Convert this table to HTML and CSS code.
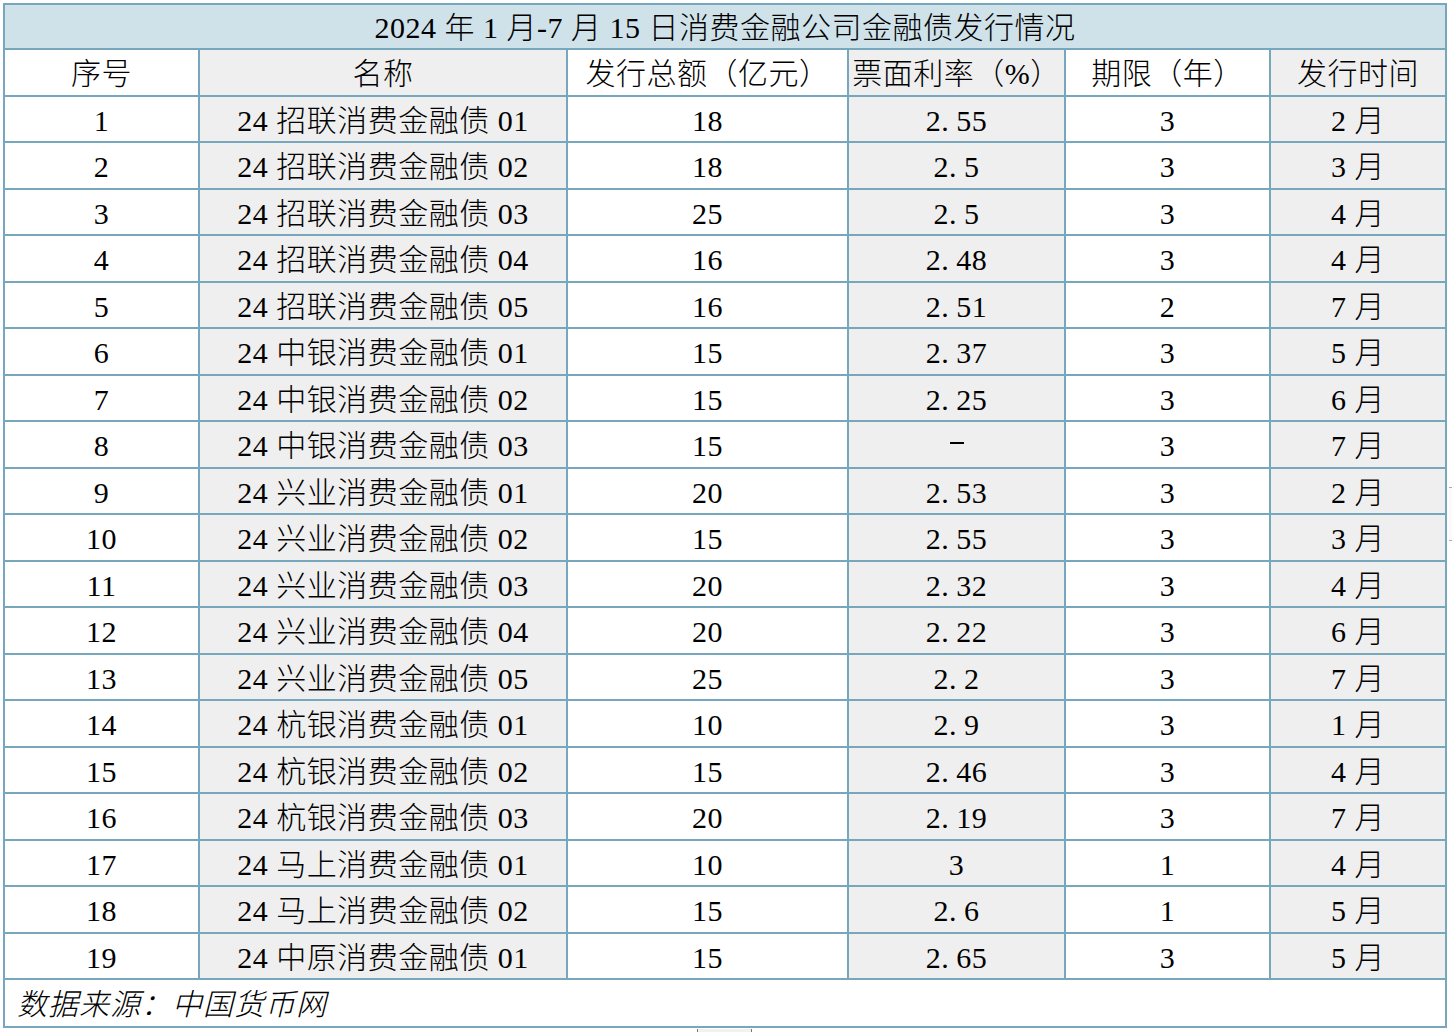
FILE: index.html
```html
<!DOCTYPE html>
<html lang="zh-CN">
<head>
<meta charset="utf-8">
<title>2024年1月-7月15日消费金融公司金融债发行情况</title>
<link rel="stylesheet" href="styles.css">
</head>
<body>
<div class="sheet">
  <div class="cell title">2024 年 1 月-7 月 15 日消费金融公司金融债发行情况</div>

  <div class="cell">序号</div><div class="cell g">名称</div><div class="cell">发行总额（亿元）</div><div class="cell g">票面利率（%）</div><div class="cell">期限（年）</div><div class="cell g">发行时间</div>

  <div class="cell">1</div><div class="cell g">24 招联消费金融债 01</div><div class="cell">18</div><div class="cell g">2<span class="pt">.</span>55</div><div class="cell">3</div><div class="cell g">2 月</div>
  <div class="cell">2</div><div class="cell g">24 招联消费金融债 02</div><div class="cell">18</div><div class="cell g">2<span class="pt">.</span>5</div><div class="cell">3</div><div class="cell g">3 月</div>
  <div class="cell">3</div><div class="cell g">24 招联消费金融债 03</div><div class="cell">25</div><div class="cell g">2<span class="pt">.</span>5</div><div class="cell">3</div><div class="cell g">4 月</div>
  <div class="cell">4</div><div class="cell g">24 招联消费金融债 04</div><div class="cell">16</div><div class="cell g">2<span class="pt">.</span>48</div><div class="cell">3</div><div class="cell g">4 月</div>
  <div class="cell">5</div><div class="cell g">24 招联消费金融债 05</div><div class="cell">16</div><div class="cell g">2<span class="pt">.</span>51</div><div class="cell">2</div><div class="cell g">7 月</div>
  <div class="cell">6</div><div class="cell g">24 中银消费金融债 01</div><div class="cell">15</div><div class="cell g">2<span class="pt">.</span>37</div><div class="cell">3</div><div class="cell g">5 月</div>
  <div class="cell">7</div><div class="cell g">24 中银消费金融债 02</div><div class="cell">15</div><div class="cell g">2<span class="pt">.</span>25</div><div class="cell">3</div><div class="cell g">6 月</div>
  <div class="cell">8</div><div class="cell g">24 中银消费金融债 03</div><div class="cell">15</div><div class="cell g"><span class="dash"></span></div><div class="cell">3</div><div class="cell g">7 月</div>
  <div class="cell">9</div><div class="cell g">24 兴业消费金融债 01</div><div class="cell">20</div><div class="cell g">2<span class="pt">.</span>53</div><div class="cell">3</div><div class="cell g">2 月</div>
  <div class="cell">10</div><div class="cell g">24 兴业消费金融债 02</div><div class="cell">15</div><div class="cell g">2<span class="pt">.</span>55</div><div class="cell">3</div><div class="cell g">3 月</div>
  <div class="cell">11</div><div class="cell g">24 兴业消费金融债 03</div><div class="cell">20</div><div class="cell g">2<span class="pt">.</span>32</div><div class="cell">3</div><div class="cell g">4 月</div>
  <div class="cell">12</div><div class="cell g">24 兴业消费金融债 04</div><div class="cell">20</div><div class="cell g">2<span class="pt">.</span>22</div><div class="cell">3</div><div class="cell g">6 月</div>
  <div class="cell">13</div><div class="cell g">24 兴业消费金融债 05</div><div class="cell">25</div><div class="cell g">2<span class="pt">.</span>2</div><div class="cell">3</div><div class="cell g">7 月</div>
  <div class="cell">14</div><div class="cell g">24 杭银消费金融债 01</div><div class="cell">10</div><div class="cell g">2<span class="pt">.</span>9</div><div class="cell">3</div><div class="cell g">1 月</div>
  <div class="cell">15</div><div class="cell g">24 杭银消费金融债 02</div><div class="cell">15</div><div class="cell g">2<span class="pt">.</span>46</div><div class="cell">3</div><div class="cell g">4 月</div>
  <div class="cell">16</div><div class="cell g">24 杭银消费金融债 03</div><div class="cell">20</div><div class="cell g">2<span class="pt">.</span>19</div><div class="cell">3</div><div class="cell g">7 月</div>
  <div class="cell">17</div><div class="cell g">24 马上消费金融债 01</div><div class="cell">10</div><div class="cell g">3</div><div class="cell">1</div><div class="cell g">4 月</div>
  <div class="cell">18</div><div class="cell g">24 马上消费金融债 02</div><div class="cell">15</div><div class="cell g">2<span class="pt">.</span>6</div><div class="cell">1</div><div class="cell g">5 月</div>
  <div class="cell">19</div><div class="cell g">24 中原消费金融债 01</div><div class="cell">15</div><div class="cell g">2<span class="pt">.</span>65</div><div class="cell">3</div><div class="cell g">5 月</div>

  <div class="cell foot">数据来源：中国货币网</div>
</div>
<div class="tab-bottom"></div>
<div class="tab-right"></div>
</body>
</html>
```

FILE: styles.css
```css
html, body {
  margin: 0;
  padding: 0;
  background: #ffffff;
}

body {
  position: relative;
  width: 1452px;
  height: 1032px;
  overflow: hidden;
  font-family: "Liberation Serif", "Noto Sans CJK SC", serif;
  color: #000;
}

.sheet {
  margin: 3px 0 0 3px;
  width: 1444px;
  padding: 2px;
  box-sizing: border-box;
  background: #77a7bc;
  display: grid;
  grid-template-columns: 193px 366px 279px 215px 203px 174px;
  grid-template-rows: 43px 45px repeat(9, 44px 45px) 44px 46px;
  gap: 2px;
}

.cell {
  background: #ffffff;
  display: flex;
  align-items: center;
  justify-content: center;
  font-size: 30px;
  font-weight: 300;
  letter-spacing: 0.5px;
  line-height: 1;
  white-space: pre;
  padding-top: 3px;
  box-sizing: border-box;
}

.cell.g {
  background: #efefef;
}

.pt {
  display: inline-block;
  width: 15px;
  text-align: left;
}

.title {
  grid-column: 1 / -1;
  background: #cfe1e9;
  padding-top: 2px;
}

.foot {
  grid-column: 1 / -1;
  justify-content: flex-start;
  padding-left: 12px;
  font-style: italic;
  letter-spacing: 1px;
}

.dash {
  display: block;
  width: 14px;
  height: 2px;
  background: #000;
  margin-top: -6px;
}

.tab-bottom {
  position: absolute;
  left: 697px;
  top: 1029px;
  width: 53px;
  height: 6px;
  background: #f2f2f2;
  border-left: 1px solid #777;
  border-right: 1px solid #777;
}

.tab-right {
  position: absolute;
  left: 1449px;
  top: 487px;
  width: 4px;
  height: 52px;
  border-top: 1px solid #aaa;
  border-bottom: 1px solid #aaa;
  background: #fafafa;
}
```
